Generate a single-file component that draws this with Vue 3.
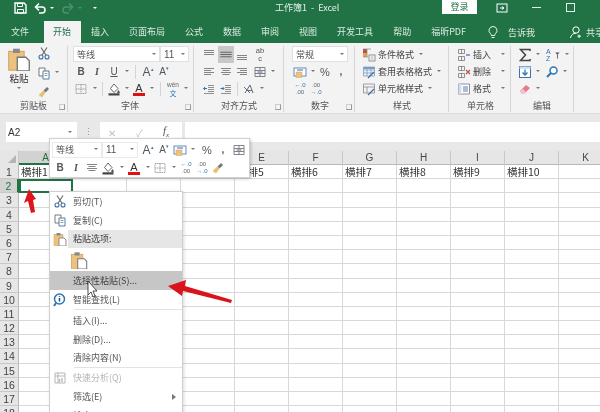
<script setup>
const tabs = ['文件', '开始', '插入', '页面布局', '公式', '数据', '审阅', '视图', '开发工具', '帮助', '福昕PDF']
const cols = ['A', 'B', 'C', 'D', 'E', 'F', 'G', 'H', 'I', 'J', 'K']
const rows = Array.from({ length: 18 }, (_, i) => i + 1)
const firstRow = ['横排1', '', '', '', '横排5', '横排6', '横排7', '横排8', '横排9', '横排10', '']

const icons = {
  save: '<path d="M2 2h9l2 2v8H2z" fill="none" stroke="#fff" stroke-width="1.4"/><path d="M4.5 2.5h5v3h-5zM4.5 8.5h6v3.500h-6z" fill="none" stroke="#fff"/>',
  undo: '<path d="M3 6h6a3 3 0 0 1 0 6H6" fill="none" stroke="#fff" stroke-width="1.5"/><path d="M6 2.500 2.500 6 6 9.500" fill="none" stroke="#fff" stroke-width="1.500"/>',
  redo: '<path d="M11 6H5a3 3 0 0 0 0 6h3" fill="none" stroke="#4e9070" stroke-width="1.5"/><path d="M8 2.500 11.500 6 8 9.500" fill="none" stroke="#4e9070" stroke-width="1.500"/>',
  paste: '<rect x="1" y="2.500" width="9" height="11" fill="#edc27f" stroke="#c99a55" stroke-width=".5"/><rect x="3.500" y="1" width="4" height="2.500" fill="#8a8a8a"/><path d="M6 6h5l2 2v6H6z" fill="#fff" stroke="#777" stroke-width=".8"/>',
  cut: '<circle cx="4" cy="11" r="2" fill="none" stroke="#3f6fa8" stroke-width="1.100"/><circle cx="10" cy="11" r="2" fill="none" stroke="#3f6fa8" stroke-width="1.100"/><path d="M5 9.200 10 1.500M9 9.200 4 1.500" stroke="#666" stroke-width="1.100"/>',
  copy: '<path d="M2 2h6v8H2z" fill="#fff" stroke="#6b6b6b" stroke-width=".9"/><path d="M6 5h6v8H6z" fill="#fff" stroke="#3f6fa8" stroke-width=".9"/><path d="M7.500 7.500h3M7.500 9.500h3" stroke="#888" stroke-width=".8"/>',
  brush: '<path d="M6.500 5.500 10 2l2 2-3.500 3.500z" fill="#777"/><path d="M2 9.500 6.500 5.500l2 2L5 12.500 3.500 11 3 12z" fill="#e8bd77"/>',
  bord: '<path d="M2 2.500h10v9H2zM7 2.500v9M2 7h10" fill="none" stroke="#9a9a9a" stroke-width=".9" stroke-dasharray="1.500 .6"/>',
  fill: '<path d="M7 2 11 6.500 7 10.500 3.500 6.500z" fill="#fff" stroke="#555" stroke-width=".9"/><path d="M11.500 8c.8 1 1.200 1.600 1.200 2.200a1.200 1.200 0 0 1-2.400 0c0-.6.4-1.200 1.200-2.200z" fill="#555"/><rect x="1.500" y="11.300" width="11" height="2.200" fill="#444"/>',
  alT: '<path d="M2 2.500h10M2 4.500h10M2 6.500h10" stroke="#777" stroke-width=".9"/>',
  alM: '<path d="M2 5h10M2 7h10M2 9h10" stroke="#666" stroke-width=".9"/>',
  alB: '<path d="M2 7.500h10M2 9.500h10M2 11.500h10" stroke="#777" stroke-width=".9"/>',
  alL: '<path d="M2 3.500h10M2 5.500h7M2 7.500h10M2 9.500h7" stroke="#777" stroke-width=".9"/>',
  alC: '<path d="M2 3.500h10M3.500 5.500h7M2 7.500h10M3.500 9.500h7" stroke="#777" stroke-width=".9"/>',
  alR: '<path d="M2 3.500h10M5 5.500h7M2 7.500h10M5 9.500h7" stroke="#777" stroke-width=".9"/>',
  merge: '<path d="M2 2.500h10v9H2zM2 5.500h10M2 8.500h10M7 2.500v3M7 8.500v3" fill="none" stroke="#777" stroke-width=".9"/><path d="M4.500 7h5" stroke="#3f6fa8"/>',
  indL: '<path d="M6 3.500h6M6 5.500h6M6 7.500h6M6 9.500h6M2 11.500h10" stroke="#777" stroke-width=".8"/><path d="M5 6.500H1.500M3 5 1.500 6.500 3 8" fill="none" stroke="#2e75b6"/>',
  indR: '<path d="M6 3.500h6M6 5.500h6M6 7.500h6M6 9.500h6M2 11.500h10" stroke="#777" stroke-width=".8"/><path d="M1.500 6.500H5M3.500 5 5 6.500 3.500 8" fill="none" stroke="#2e75b6"/>',
  orient: '<path d="M3 11 8 3l3 8M4.800 8.500h5" fill="none" stroke="#666" stroke-width="1"/><path d="M2 5l6 6" stroke="#3f6fa8"/>',
  fmtNum: '<rect x="1" y="3" width="12" height="8" fill="#fff" stroke="#3f6fa8" stroke-width=".8"/><rect x="3" y="7" width="6" height="5.500" fill="#edc27f" stroke="#c99a55" stroke-width=".4"/><path d="M4 5h6" stroke="#3f6fa8"/>',
  cond: '<rect x="1" y="1" width="4" height="4" fill="#c0504d"/><rect x="1" y="5" width="4" height="4" fill="#e8a33d"/><path d="M1 1h8M5 1v8M1 9h5" fill="none" stroke="#8a8a8a" stroke-width=".7"/><rect x="7" y="7" width="6" height="6" fill="#fff" stroke="#777" stroke-width=".8"/><path d="M8.500 9h3M8.500 11h3" stroke="#888" stroke-width=".7"/>',
  table: '<path d="M1.500 2h11v9h-11zM1.500 5h11M1.500 8h11M5 2v9M9 2v9" fill="none" stroke="#7a9cc4" stroke-width=".8"/><rect x="1.500" y="2" width="11" height="2" fill="#7a9cc4"/><path d="M6 13 12 7" stroke="#3f6fa8" stroke-width="1.300"/>',
  style: '<path d="M1.500 2h11v9h-11zM1.500 5h11M5 5v6" fill="none" stroke="#8a8a8a" stroke-width=".8"/><path d="M6 13 12 7" stroke="#3f6fa8" stroke-width="1.300"/>',
  ins: '<path d="M1.500 1.500h6v4h-6zM1.500 8.500h6v4h-6zM4.500 1.500v4M4.500 8.500v4" fill="none" stroke="#777" stroke-width=".8"/><path d="M9 7h4" stroke="#3f6fa8" stroke-width="1.200"/>',
  del: '<path d="M1.500 1.500h6v4h-6zM1.500 8.500h6v4h-6zM4.500 1.500v4M4.500 8.500v4" fill="none" stroke="#777" stroke-width=".8"/><path d="M9 5l4 4M13 5l-4 4" stroke="#c0504d" stroke-width="1.200"/>',
  fmt: '<path d="M1.500 2h11v10h-11z" fill="#fff" stroke="#777" stroke-width=".8"/><path d="M1.500 2h3v10h-3z" fill="#cfe0f2"/><path d="M6 5h5M6 7h5M6 9h5" stroke="#3f6fa8" stroke-width=".9"/>',
  sigma: '<path d="M12 3V1.500H2.500L7.500 7l-5 5.500H12V11" fill="none" stroke="#444" stroke-width="1.500"/>',
  sort: '<path d="M5 4h5L7.500 7zM7 7h1v4H7z" fill="#555"/>',
  down: '<rect x="1.500" y="1.500" width="11" height="11" fill="#fff" stroke="#3f6fa8"/><path d="M1.500 1.500h11v2.500h-11z" fill="#cfe0f2"/><path d="M7 4.500v5M4.500 7.500 7 10l2.500-2.500" fill="none" stroke="#2e75b6" stroke-width="1.300"/>',
  find: '<circle cx="8.500" cy="5.500" r="3.500" fill="#fff" stroke="#2e75b6" stroke-width="1.500"/><path d="M6 8 2 12" stroke="#2e75b6" stroke-width="2"/>',
  erase: '<path d="M2 9 8 3l4 3-6 6H4z" fill="#e57a8c"/><path d="M2 9l2 3h2l2-2-3-3z" fill="#f2c6cd"/>',
  smart: '<circle cx="6.500" cy="6" r="5" fill="#fff" stroke="#2e75b6" stroke-width="1.500"/><path d="M3 10 1 13" stroke="#2e75b6" stroke-width="2"/><path d="M6.500 3v.8M6.500 5v3.500" stroke="#1f4e79" stroke-width="1.500"/>',
  quick: '<path d="M2 2h10v10H2zM2 5h10M5 2v10" fill="none" stroke="#b5b5b5"/><path d="M6.500 11V8M9 11V7" stroke="#b5b5b5" stroke-width="1.300"/>',
  bulb: '<path d="M7 1.500a4 4 0 0 0-2.400 7.200c.5.400.7 1 .7 1.800h3.400c0-.8.2-1.400.7-1.800A4 4 0 0 0 7 1.500zM5.500 12.500h3" fill="none" stroke="#fff" stroke-width=".9"/>',
  user: '<circle cx="7" cy="5" r="3.200" fill="none" stroke="#fff"/><path d="M1.500 13c.4-3 2.600-4.800 5.500-4.800M10 9.500v3.500M8.500 11.200h3.500" fill="none" stroke="#fff"/>',
  box: '<rect x="2" y="3" width="10" height="8" fill="none" stroke="#fff"/><path d="M5 7h4M7 5.500 9 7 7 8.500" fill="none" stroke="#fff"/>'
}

const styleRows = [
  { icon: 'cond', text: '条件格式' },
  { icon: 'table', text: '套用表格格式' },
  { icon: 'style', text: '单元格样式' }
]
const cellRows = [
  { icon: 'ins', text: '插入' },
  { icon: 'del', text: '删除' },
  { icon: 'fmt', text: '格式' }
]
</script>

<template>
  <div class="excel">
    <!-- タイトルバー -->
    <div class="titlebar">
      <div class="qat">
        <svg class="ic" viewBox="0 0 14 14" v-html="icons.save"></svg>
        <svg class="ic undo" viewBox="0 0 14 14" v-html="icons.undo"></svg>
        <i class="dd white"></i>
        <svg class="ic redo" viewBox="0 0 14 14" v-html="icons.redo"></svg>
        <i class="dd dim"></i>
        <i class="dd white custom"></i>
      </div>
      <div class="doc">工作簿1&nbsp; -&nbsp; Excel</div>
      <div class="login">登录</div>
      <div class="winbtns">
        <svg class="ic" viewBox="0 0 14 14" v-html="icons.box"></svg>
        <span class="min"></span>
        <span class="max"></span>
      </div>
    </div>

    <!-- タブ -->
    <div class="tabs">
      <span v-for="t in tabs" :key="t" class="tab" :class="{ active: t === '开始' }">{{ t }}</span>
      <svg class="ic bulb" viewBox="0 0 14 14" v-html="icons.bulb"></svg>
      <span class="tell">告诉我</span>
      <svg class="ic user" viewBox="0 0 14 14" v-html="icons.user"></svg>
      <span class="share">共享</span>
    </div>

    <!-- リボン -->
    <div class="ribbon">
      <section class="group g-clip">
        <div class="group-body clip">
          <div class="paste">
            <svg class="big" viewBox="0 0 14 14" v-html="icons.paste"></svg>
            <span>粘贴</span>
            <i class="dd"></i>
          </div>
          <div class="clip-small">
            <svg class="ic" viewBox="0 0 14 14" v-html="icons.cut"></svg>
            <div class="r"><svg class="ic" viewBox="0 0 14 14" v-html="icons.copy"></svg><i class="dd"></i></div>
            <svg class="ic" viewBox="0 0 14 14" v-html="icons.brush"></svg>
          </div>
        </div>
        <div class="label">剪贴板<b class="launch"></b></div>
      </section>

      <section class="group g-font">
        <div class="group-body">
          <div class="r selects">
            <div class="select font-name">等线<i class="dd"></i></div>
            <div class="select font-size">11<i class="dd"></i></div>
          </div>
          <div class="r">
            <span class="tb bold">B</span>
            <span class="tb ital">I</span>
            <span class="tb under u-gap">U</span>
            <i class="dd"></i>
            <b class="sep"></b>
            <span class="tb grow">A<sup>▴</sup></span>
            <span class="tb shrink">A<sup>▾</sup></span>
          </div>
          <div class="r">
            <svg class="ic" viewBox="0 0 14 14" v-html="icons.bord"></svg>
            <i class="dd tight"></i>
            <b class="sep s3"></b>
            <svg class="ic" viewBox="0 0 14 14" v-html="icons.fill"></svg>
            <i class="dd"></i>
            <span class="tb color">A</span>
            <i class="dd"></i>
            <b class="sep"></b>
            <span class="tb wen">wén<em>文</em></span>
            <i class="dd"></i>
          </div>
        </div>
        <div class="label">字体<b class="launch"></b></div>
      </section>

      <section class="group g-align">
        <div class="group-body">
          <div class="r">
            <svg class="ic" viewBox="0 0 14 14" v-html="icons.alT"></svg>
            <svg class="ic on" viewBox="0 0 14 14" v-html="icons.alM"></svg>
            <svg class="ic" viewBox="0 0 14 14" v-html="icons.alB"></svg>
            <span class="tb ab">ab<br>c</span>
          </div>
          <div class="r">
            <svg class="ic" viewBox="0 0 14 14" v-html="icons.alL"></svg>
            <svg class="ic mid" viewBox="0 0 14 14" v-html="icons.alC"></svg>
            <svg class="ic" viewBox="0 0 14 14" v-html="icons.alR"></svg>
            <svg class="ic merge" viewBox="0 0 14 14" v-html="icons.merge"></svg>
            <i class="dd"></i>
          </div>
          <div class="r">
            <svg class="ic" viewBox="0 0 14 14" v-html="icons.indL"></svg>
            <svg class="ic mid" viewBox="0 0 14 14" v-html="icons.indR"></svg>
            <b class="sep s3"></b>
            <svg class="ic" viewBox="0 0 14 14" v-html="icons.orient"></svg>
            <i class="dd"></i>
          </div>
        </div>
        <div class="label">对齐方式<b class="launch"></b></div>
      </section>

      <section class="group g-num">
        <div class="group-body">
          <div class="r selects">
            <div class="select num-fmt">常规<i class="dd"></i></div>
          </div>
          <div class="r">
            <svg class="ic" viewBox="0 0 14 14" v-html="icons.fmtNum"></svg>
            <i class="dd"></i>
            <span class="tb pct">%</span>
            <span class="tb comma">,</span>
          </div>
          <div class="r">
            <span class="decimal"><u>←.0</u>.00</span>
            <span class="decimal">.00<u>→.0</u></span>
          </div>
        </div>
        <div class="label">数字<b class="launch"></b></div>
      </section>

      <section class="group g-style">
        <div class="group-body">
          <div v-for="s in styleRows" :key="s.text" class="r item">
            <svg class="ic" viewBox="0 0 14 14" v-html="icons[s.icon]"></svg>
            <span>{{ s.text }}</span>
            <i class="dd"></i>
          </div>
        </div>
        <div class="label">样式</div>
      </section>

      <section class="group g-cell">
        <div class="group-body">
          <div v-for="s in cellRows" :key="s.text" class="r item">
            <svg class="ic" viewBox="0 0 14 14" v-html="icons[s.icon]"></svg>
            <span>{{ s.text }}</span>
            <i class="dd push"></i>
          </div>
        </div>
        <div class="label">单元格</div>
      </section>

      <section class="group g-edit">
        <div class="group-body">
          <div class="r">
            <svg class="ic" viewBox="0 0 14 14" v-html="icons.sigma"></svg>
            <i class="dd"></i>
            <span class="az">A<br>Z</span>
            <svg class="ic sorter" viewBox="0 0 14 14" v-html="icons.sort"></svg>
            <i class="dd"></i>
          </div>
          <div class="r">
            <svg class="ic" viewBox="0 0 14 14" v-html="icons.down"></svg>
            <i class="dd"></i>
            <svg class="ic finder" viewBox="0 0 14 14" v-html="icons.find"></svg>
            <i class="dd"></i>
          </div>
          <div class="r">
            <svg class="ic" viewBox="0 0 14 14" v-html="icons.erase"></svg>
            <i class="dd"></i>
          </div>
        </div>
        <div class="label">编辑</div>
      </section>
    </div>

    <!-- 数式バー -->
    <div class="formula">
      <div class="namebox">A2<i class="dd"></i></div>
      <div class="dots">⋮</div>
      <div class="fxbox">
        <span class="x">✕</span>
        <span class="check">✓</span>
        <span class="fx">f<sub>x</sub></span>
      </div>
      <div class="input"></div>
    </div>

    <!-- シート -->
    <div class="sheet">
      <div class="head-row">
        <div class="corner"><b></b></div>
        <div v-for="c in cols" :key="c" class="col-head" :class="{ sel: c === 'A' }">{{ c }}</div>
      </div>
      <div v-for="r in rows" :key="r" class="row">
        <div class="row-head" :class="{ sel: r === 2 }">{{ r }}</div>
        <div v-for="(c, i) in cols" :key="c" class="cell" :class="{ current: r === 2 && i === 0 }">
          <template v-if="r === 1">{{ firstRow[i] }}</template>
        </div>
      </div>
    </div>

    <!-- ミニツールバー -->
    <div class="mini">
      <div class="r">
        <div class="select mini-font">等线<i class="dd"></i></div>
        <div class="select mini-size">11<i class="dd"></i></div>
        <span class="tb grow">A<sup>▴</sup></span>
        <span class="tb shrink">A<sup>▾</sup></span>
        <svg class="ic" viewBox="0 0 14 14" v-html="icons.fmtNum"></svg>
        <i class="dd"></i>
        <span class="tb pct mini-pct">%</span>
        <span class="tb comma">,</span>
        <svg class="ic" viewBox="0 0 14 14" v-html="icons.merge"></svg>
      </div>
      <div class="r">
        <span class="tb bold">B</span>
        <span class="tb ital">I</span>
        <svg class="ic" viewBox="0 0 14 14" v-html="icons.alC"></svg>
        <svg class="ic" viewBox="0 0 14 14" v-html="icons.fill"></svg>
        <i class="dd tight"></i>
        <span class="tb color">A</span>
        <i class="dd tight"></i>
        <svg class="ic" viewBox="0 0 14 14" v-html="icons.bord"></svg>
        <i class="dd tight"></i>
        <span class="decimal"><u>←.0</u>.00</span>
        <span class="decimal">.00<u>→.0</u></span>
        <svg class="ic" viewBox="0 0 14 14" v-html="icons.brush"></svg>
      </div>
    </div>

    <!-- 右クリックメニュー -->
    <div class="menu">
      <div class="mi"><svg class="ic" viewBox="0 0 14 14" v-html="icons.cut"></svg><span>剪切(T)</span></div>
      <div class="mi"><svg class="ic" viewBox="0 0 14 14" v-html="icons.copy"></svg><span>复制(C)</span></div>
      <div class="mi opt"><svg class="ic" viewBox="0 0 14 14" v-html="icons.paste"></svg><span class="opt-text">粘贴选项:</span></div>
      <div class="paste-opt"><svg class="pic" viewBox="0 0 14 14" v-html="icons.paste"></svg></div>
      <div class="mi hover"><i class="ic"></i><span>选择性粘贴(S)...</span></div>
      <div class="mi"><svg class="ic" viewBox="0 0 14 14" v-html="icons.smart"></svg><span>智能查找(L)</span></div>
      <div class="line first-line"></div>
      <div class="mi"><i class="ic"></i><span>插入(I)...</span></div>
      <div class="mi"><i class="ic"></i><span>删除(D)...</span></div>
      <div class="mi"><i class="ic"></i><span>清除内容(N)</span></div>
      <div class="line"></div>
      <div class="mi off"><svg class="ic" viewBox="0 0 14 14" v-html="icons.quick"></svg><span>快速分析(Q)</span></div>
      <div class="mi"><i class="ic"></i><span>筛选(E)</span><b class="more"></b></div>
      <div class="mi"><i class="ic"></i><span>排序(O)</span><b class="more"></b></div>
    </div>

    <!-- 注釈の矢印とカーソル -->
    <svg class="overlay" viewBox="0 0 600 412">
      <path class="mark" d="M29 189 36 199 33 200 35 212 31 213 28 201 24 203z" fill="#e0141c"/>
      <path class="mark" d="M168 286 186 280 185 286 232 300 231 303 183 291 182 296z" fill="#d8141c"/>
      <path d="M88 281v14l3-3 2 5 2-1-2-5h4z" fill="#fff" stroke="#222" stroke-width=".8"/>
    </svg>
  </div>
</template>

<style scoped>
.excel {
  position: relative;
  width: 600px;
  height: 412px;
  overflow: hidden;
  background: #fff;
  color: #444;
  font-family: "Noto Sans CJK SC", "Liberation Sans", sans-serif;
  font-size: 9px;
  filter: blur(0.3px);
}
svg { display: block; }
.ic {
  display: block;
  flex: none;
  width: 16px;
  height: 14px;
}
.r {
  display: flex;
  align-items: center;
  height: 17px;
}

/* タイトルバー */
.titlebar {
  display: flex;
  align-items: flex-start;
  height: 21px;
  background: #217346;
  color: #e4efe9;
}
.qat {
  display: flex;
  align-items: center;
  width: 256px;
  height: 16px;
  padding-left: 12px;
  box-sizing: border-box;
}
.qat .undo { margin-left: 4px; }
.qat .redo { margin-left: 4px; }
.qat .custom { margin-left: 7px; }
.doc {
  width: 186px;
  line-height: 15px;
  font-size: 9px;
  padding-left: 19px;
  box-sizing: border-box;
}
.login {
  width: 35px;
  height: 14px;
  background: #fff;
  color: #217346;
  text-align: center;
  line-height: 14px;
}
.winbtns {
  display: flex;
  align-items: center;
  height: 15px;
  padding-left: 17px;
}
.min {
  width: 9px;
  height: 1px;
  margin-left: 22px;
  background: #e4efe9;
}
.max {
  width: 7px;
  height: 7px;
  margin-left: 25px;
  border: 1px solid #e4efe9;
}

/* タブ */
.tabs {
  display: flex;
  align-items: center;
  height: 22px;
  background: #217346;
  color: #dceae2;
  padding-left: 1px;
  white-space: nowrap;
  overflow: hidden;
}
.tabs > * { flex: none; }
.tab {
  height: 22px;
  line-height: 22px;
  padding: 0 10px;
}
.tab.active {
  width: 37px;
  box-sizing: border-box;
  margin: 0 0.5px 0 4.5px;
  background: #f3f3f3;
  color: #217346;
  text-align: center;
  padding: 0;
}
.bulb { margin-left: 9px; }
.tell { margin-left: 7px; }
.user { margin-left: 33px; }
.share { margin-left: 2px; }

/* リボン */
.ribbon {
  display: flex;
  height: 71px;
  background: #f3f3f3;
  padding-top: 3px;
  box-sizing: border-box;
  border-bottom: 1px solid #dcdcdc;
}
.group {
  display: flex;
  flex-direction: column;
  flex: none;
  box-sizing: border-box;
  border-right: 1px solid #d6d6d6;
  height: 66px;
}
.group-body {
  height: 53px;
  flex: none;
}
.label {
  position: relative;
  text-align: center;
  line-height: 13px;
  color: #555;
}
.launch {
  position: absolute;
  right: 2px;
  top: 5px;
  width: 4px;
  height: 4px;
  border: 1px solid #999;
  border-top-color: #ccc;
  border-left-color: #ccc;
}
.g-clip { width: 68px; }
.g-font { width: 126px; padding-left: 5px; }
.g-align { width: 90px; padding-left: 7px; }
.g-num { width: 71px; padding-left: 8px; }
.g-style { width: 94px; padding-left: 7px; }
.g-cell { width: 62px; padding-left: 8px; }
.g-edit { width: 63px; padding-left: 6px; }
.g-font .label, .g-align .label, .g-num .label, .g-style .label, .g-cell .label, .g-edit .label { margin-left: -6px; }

.clip { display: flex; }
.paste {
  display: flex;
  flex-direction: column;
  align-items: center;
  width: 36px;
  padding-left: 2px;
  box-sizing: border-box;
}
.paste span { font-size: 9.5px; line-height: 14px; color: #333; }
.paste .big { width: 24px; height: 24px; margin-top: 1px; }
.paste .dd { margin-top: 2px; }
.clip-small { display: flex; flex-direction: column; gap: 4px; }
.clip-small .ic { height: 14px; }

.dd {
  display: block;
  flex: none;
  width: 9px;
  height: 3px;
  color: #777;
}
.dd::before {
  content: "";
  display: block;
  width: 0;
  margin: 0 auto;
  border-top: 2.5px solid currentColor;
  border-left: 2px solid transparent;
  border-right: 2px solid transparent;
}
.dd.white { color: #fff; width: 8px; }
.dd.dim { color: #4e9070; width: 8px; }
.dd.tight { margin-left: 1px; }
.sep {
  display: block;
  flex: none;
  width: 1px;
  height: 14px;
  margin: 0 4px;
  background: #d4d4d4;
}
.sep.s3 { margin: 0 3px; }
.tb {
  display: block;
  flex: none;
  width: 16px;
  text-align: center;
  font-family: "Liberation Sans", sans-serif;
  font-size: 10px;
  line-height: 14px;
  color: #555;
}
.tb sup { font-size: 5px; color: #2e75b6; line-height: 0; vertical-align: 5px; }
.bold { font-weight: 700; }
.ital { font-style: italic; font-family: "Liberation Serif", serif; font-weight: 700; }
.under { text-decoration: underline; }
.u-gap { margin-left: 1px; }
.grow { font-size: 12px; }
.color {
  font-size: 11px;
  line-height: 12px;
  height: 14px;
  box-sizing: border-box;
  border-bottom: 3px solid #e01010;
  margin: 0 2px;
  width: 12px;
  color: #333;
}
.wen { font-size: 6.5px; line-height: 8px; color: #666; }
.wen em { display: block; font-style: normal; font-size: 7px; line-height: 8px; font-family: "Noto Sans CJK SC", sans-serif; color: #2e75b6; }

.selects { height: 16px; margin-bottom: 1px; }
.select {
  display: flex;
  align-items: center;
  justify-content: space-between;
  box-sizing: border-box;
  height: 16px;
  padding: 0 1px 0 3px;
  background: #fff;
  border: 1px solid #e0e0e0;
  color: #555;
}
.font-name { width: 87px; }
.font-size { width: 29px; font-family: "Liberation Sans", sans-serif; font-size: 10px; }
.num-fmt { width: 56px; }

.on { background: #c8c8c8; height: 17px; margin-left: 1px; }
.mid { margin-left: 1px; }
.merge { margin-left: 2px; }
.ab {
  margin-left: 2px;
  font-size: 7.5px;
  line-height: 8px;
  color: #555;
}
.pct { font-size: 11px; }
.comma { font-weight: 700; }
.decimal {
  display: block;
  flex: none;
  width: 16px;
  font-family: "Liberation Sans", sans-serif;
  font-size: 6px;
  line-height: 7px;
  text-align: center;
  color: #666;
}
.decimal u { display: block; text-decoration: none; color: #2e75b6; }

.item { gap: 2px; color: #444; white-space: nowrap; }
.item .ic { width: 14px; }
.push { margin-left: 5px; }
.az {
  display: block;
  font-family: "Liberation Sans", sans-serif;
  font-size: 7px;
  line-height: 7px;
  margin-left: 4px;
  color: #2e75b6;
}
.sorter { width: 12px; }
.finder { margin-left: 2px; }

/* 数式バー */
.formula {
  display: flex;
  height: 37px;
  box-sizing: border-box;
  background: #e8e8e8;
  padding: 8px 0 9px;
  align-items: stretch;
}
.namebox {
  display: flex;
  align-items: center;
  justify-content: space-between;
  box-sizing: border-box;
  width: 71px;
  margin-left: 6px;
  padding: 0 3px 0 2px;
  background: #fff;
  font-family: "Liberation Sans", sans-serif;
  font-size: 10px;
  color: #333;
}
.dots {
  width: 23px;
  text-align: center;
  line-height: 20px;
  color: #999;
}
.fxbox {
  display: flex;
  align-items: center;
  box-sizing: border-box;
  width: 82px;
  background: #fff;
  padding-left: 8px;
  color: #c0c0c0;
  font-size: 10px;
}
.x { width: 28px; }
.check { width: 27px; }
.fx { font-family: "Liberation Serif", serif; font-style: italic; color: #555; font-size: 11px; }
.fx sub { font-size: 7px; }
.input {
  flex: 1;
  margin-left: 3px;
  background: #fff;
}

/* シート */
.sheet {
  margin-top: -1px;
}
.head-row {
  display: flex;
  height: 15px;
  background: #e6e6e6;
  border-top: 1px solid #e6e6e6;
  box-sizing: border-box;
}
.corner {
  position: relative;
  width: 19px;
  flex: none;
  box-sizing: border-box;
  border-right: 1px solid #c8c8c8;
}
.corner b {
  position: absolute;
  right: 2px;
  bottom: 2px;
  border-left: 8px solid transparent;
  border-bottom: 8px solid #b5b5b5;
}
.col-head {
  width: 54px;
  flex: none;
  box-sizing: border-box;
  border-right: 1px solid #c8c8c8;
  border-bottom: 1px solid #b8b8b8;
  text-align: center;
  font-family: "Liberation Sans", sans-serif;
  font-size: 10px;
  line-height: 14px;
  color: #444;
}
.col-head.sel {
  background: #d2d2d2;
  border-bottom: 2px solid #217346;
  color: #217346;
}
.row {
  display: flex;
  height: 14.2px;
}
.row-head {
  width: 19px;
  flex: none;
  box-sizing: border-box;
  background: #e6e6e6;
  border-right: 1px solid #b8b8b8;
  border-bottom: 1px solid #c8c8c8;
  text-align: center;
  font-family: "Liberation Sans", sans-serif;
  font-size: 10.5px;
  line-height: 14px;
  color: #444;
}
.row-head.sel {
  background: #d2d2d2;
  color: #217346;
  border-right: 2px solid #217346;
}
.cell {
  width: 54px;
  flex: none;
  box-sizing: border-box;
  border-right: 1px solid #d8d8d8;
  border-bottom: 1px solid #d8d8d8;
  padding-left: 2px;
  font-size: 10.5px;
  line-height: 14px;
  color: #333;
  white-space: nowrap;
}
.cell.current {
  border: 2px solid #217346;
}

/* ミニツールバー */
.mini {
  position: absolute;
  left: 49px;
  top: 138px;
  width: 201px;
  height: 40px;
  box-sizing: border-box;
  padding: 2px 0 0 2px;
  background: #fff;
  border: 1px solid #d0d0d0;
  box-shadow: 1px 1px 3px rgba(0, 0, 0, .2);
}
.mini .r:first-child { margin-bottom: 1px; }
.mini-font { width: 50px; border-color: #eaeaea; }
.mini-size { width: 36px; margin-right: 2px; border-color: #eaeaea; font-family: "Liberation Sans", sans-serif; font-size: 10px; }
.mini-pct { margin-left: 2px; }

/* 右クリックメニュー */
.menu {
  position: absolute;
  left: 49px;
  top: 191px;
  width: 134px;
  height: 240px;
  box-sizing: border-box;
  background: #fff;
  border: 1px solid #cfcfcf;
  box-shadow: 1px 1px 3px rgba(0, 0, 0, .15);
}
.mi {
  display: flex;
  align-items: center;
  height: 18.8px;
  font-size: 9px;
  color: #555;
  padding-left: 2px;
}
.mi .ic { margin-right: 5px; }
.opt { position: relative; }
.opt-text { color: #444; }
.opt::after {
  content: "";
  position: absolute;
  left: 18px;
  right: 0;
  top: 0;
  bottom: 0;
  background: #e6e6e6;
  z-index: 0;
}
.opt > * { position: relative; z-index: 1; }
.paste-opt {
  height: 23px;
  padding-left: 20px;
  display: flex;
  align-items: center;
}
.pic { width: 18px; height: 18px; }
.hover { background: #c6c6c6; color: #444; }
.line {
  height: 1px;
  margin-left: 24px;
  background: #e2e2e2;
}
.first-line { margin-top: 0.5px; margin-bottom: 0.5px; }
.off { color: #b5b5b5; }
.more {
  margin-left: auto;
  margin-right: 6px;
  border-left: 4px solid #777;
  border-top: 3px solid transparent;
  border-bottom: 3px solid transparent;
}
.overlay {
  position: absolute;
  left: 0;
  top: 0;
  width: 600px;
  height: 412px;
  pointer-events: none;
}
.mark { filter: blur(0.5px); }
</style>

<style>
html, body { margin: 0; overflow: hidden; background: #fff; }
</style>
